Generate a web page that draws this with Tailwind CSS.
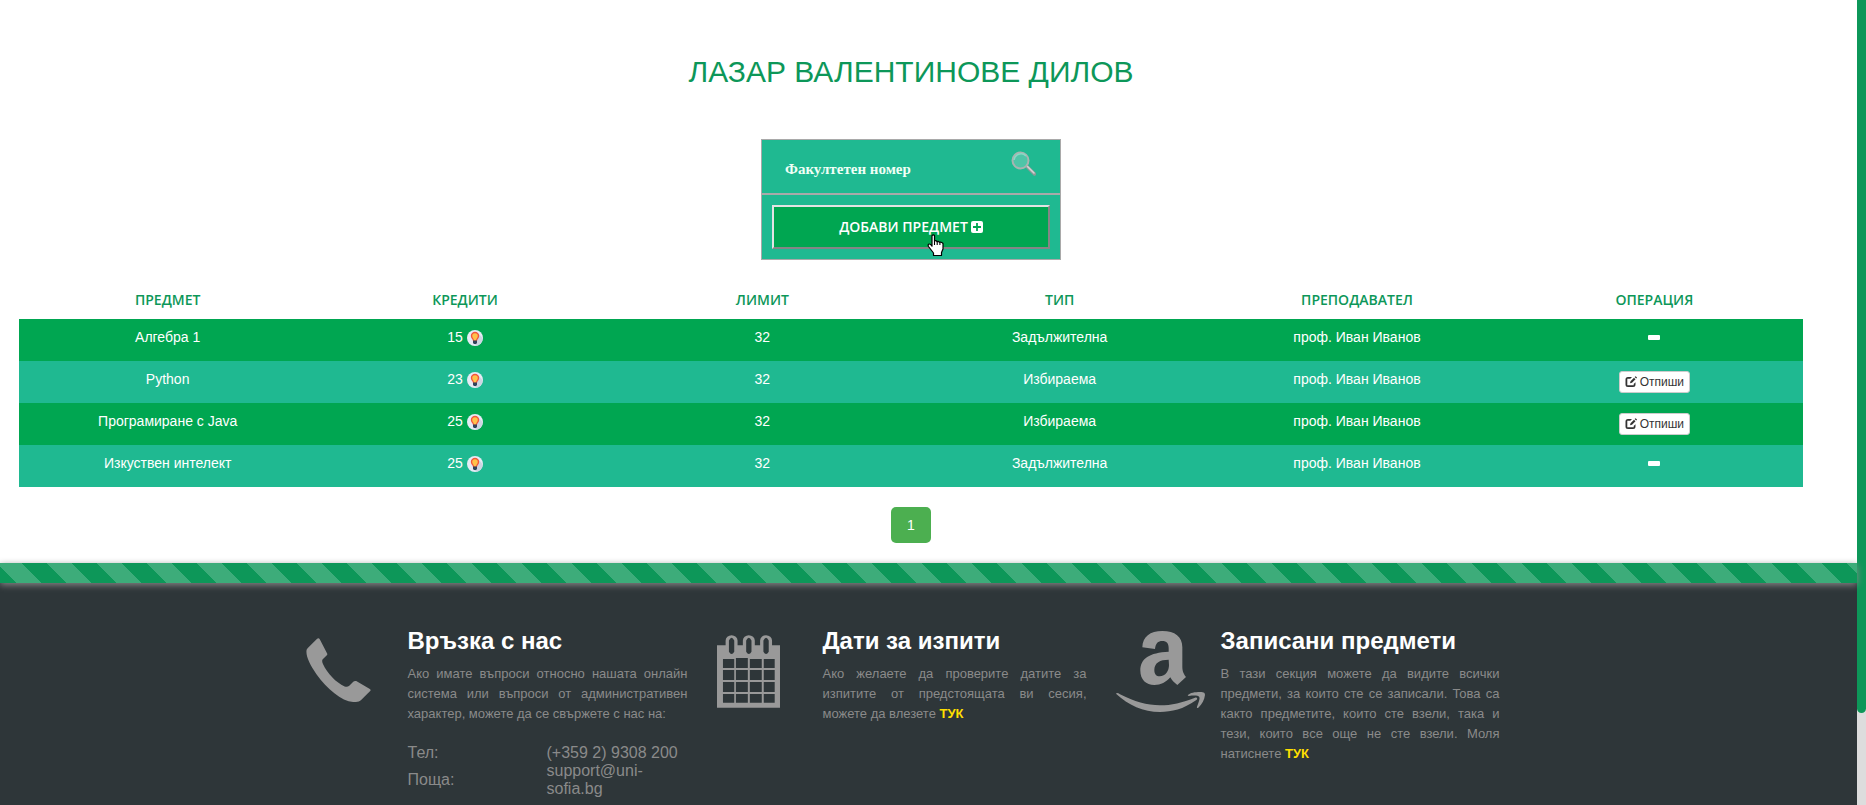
<!DOCTYPE html>
<html lang="bg">
<head>
<meta charset="utf-8">
<title>Избрани предмети</title>
<script src="https://cdn.jsdelivr.net/npm/@tailwindcss/browser@4"></script>
</head>
<body class="flex h-screen overflow-hidden bg-white font-['Liberation_Sans',Arial,sans-serif] text-sm">
<svg class="hidden">
  <symbol id="bulb" viewBox="0 0 16 16">
    <circle cx="8" cy="8" r="8" fill="#e6ebf5"/>
    <path d="M11 3l4.500 5A8 8 0 0 1 9.500 15.800L6 13z" fill="#cdd5e2"/>
    <path d="M6 11C6 9 3.800 8.500 3.800 6a4.200 4.200 0 0 1 8.400 0C12.200 8.500 10 9 10 11z" fill="#f4553c"/>
    <path d="M7 10.500C7 8.500 5.200 8 5.200 6a2.800 2.800 0 0 1 5.600 0C10.800 8 9 8.500 9 10.500z" fill="#ffc24a"/>
    <path d="M6 10.600h4v2.400L9 14H7l-1-1z" fill="#30425a"/>
  </symbol>
  <symbol id="edit" viewBox="0 0 12 12">
    <path d="M7 1H3C1.300 1 .5 1.900.5 3.500v5C.5 10.200 1.300 11 3 11h5c1.700 0 2.500-.8 2.500-2.500V6.300L8.700 8v1.200H2.300V2.800h3z" fill="#333"/>
    <path d="M5 7.200l.5-2L9 1.700l1.500 1.500L7 6.700zM9.600 1.100l.7-.7q.3-.3.600 0l.9.900q.3.300 0 .6l-.7.700z" fill="#333"/>
  </symbol>
</svg>

<div class="flex min-w-0 flex-1 flex-col">
  <main class="flex flex-col items-center pr-[54px] pl-[19px] pt-[55px]">
    <h1 class="text-[30px] leading-[33px] text-[#0d9759]">ЛАЗАР ВАЛЕНТИНОВЕ ДИЛОВ</h1>

    <form class="mt-[51px] w-[300px] border border-[#a9a9a9] bg-[#1fb991]">
      <div class="flex h-[55px] justify-between border-b-2 border-[#a9a9a9] pr-6 pl-[23px]">
        <input type="text" aria-label="Факултетен номер" placeholder="Факултетен номер" class="mt-[6px] w-48 bg-transparent font-['Liberation_Serif',serif] text-[15px] font-bold text-white outline-none placeholder:text-[#f0fff6]">
        <svg class="mt-[11px] size-[25px]" viewBox="0 0 25 25" aria-hidden="true">
          <path d="M16 15.500l7.500 7.500" stroke="#8f9a98" stroke-width="3.400" stroke-linecap="round"/>
          <path d="M16.500 15.500l6.500 6.500" stroke="#d5d5d5" stroke-width="1.600" stroke-linecap="round"/>
          <circle cx="9.500" cy="9.500" r="8" fill="#4fc5a8" stroke="#a8b4b1" stroke-width="2"/>
          <path d="M3 9a7 7 0 0 1 12-4" stroke="#8bd8c5" stroke-width="1.500" fill="none"/>
        </svg>
      </div>
      <div class="p-[10px]">
        <button type="button" class="relative flex h-11 w-full items-center justify-center gap-[3px] border-2 border-t-[#e3e3e3] border-r-[#858585] border-b-[#858585] border-l-[#e3e3e3] bg-[#00a651] font-['Open_Sans',sans-serif] text-sm font-semibold text-white">
          ДОБАВИ ПРЕДМЕТ
          <svg class="size-3" viewBox="0 0 12 12" aria-hidden="true"><rect width="12" height="12" rx="2" fill="#fff"/><path d="M6 2v8M2 6h8" stroke="#00a651" stroke-width="1.800"/></svg>
          <svg class="absolute top-[27px] left-[153px] h-[23px] w-[18px]" viewBox="0 0 18 23" aria-hidden="true">
            <path d="M5 1.500Q6.300.3 7.500 1.500V7q1.500-.8 2.500.6 1.500-.7 2.500.7 2-.6 3.500 1.200v5.500l-1.500 3.500V21.500H6.500V19L1.500 12.500Q.5 10.300 2 10q1.500-.2 3 2.200z" fill="#fff" stroke="#000" stroke-width="1.200" stroke-linejoin="round"/>
            <path d="M7.500 7v4M10.200 7.600V11M12.900 8.300V11" stroke="#000" stroke-width="1.100"/>
          </svg>
        </button>
      </div>
    </form>

    <table class="mt-[22px] w-full table-fixed border-collapse text-center">
      <thead class="font-['Open_Sans',sans-serif] text-[#0d9759]">
        <tr class="h-[37px] align-middle">
          <th class="pb-[2px] font-semibold">ПРЕДМЕТ</th><th class="pb-[2px] font-semibold">КРЕДИТИ</th><th class="pb-[2px] font-semibold">ЛИМИТ</th><th class="pb-[2px] font-semibold">ТИП</th><th class="pb-[2px] font-semibold">ПРЕПОДАВАТЕЛ</th><th class="pb-[2px] font-semibold">ОПЕРАЦИЯ</th>
        </tr>
      </thead>
      <tbody class="leading-5 text-white">
        <tr class="h-[42px] bg-[#00a651] align-top">
          <td class="pt-2">Алгебра 1</td>
          <td class="pt-2"><span class="inline-flex items-center gap-1">15 <svg class="mt-px size-4"><use href="#bulb"/></svg></span></td>
          <td class="pt-2">32</td><td class="pt-2">Задължителна</td><td class="pt-2">проф. Иван Иванов</td>
          <td class="pt-4"><span class="mx-auto block h-[5px] w-3 rounded-[1px] bg-white"></span></td>
        </tr>
        <tr class="h-[42px] bg-[#1fb991] align-top">
          <td class="pt-2">Python</td>
          <td class="pt-2"><span class="inline-flex items-center gap-1">23 <svg class="mt-px size-4"><use href="#bulb"/></svg></span></td>
          <td class="pt-2">32</td><td class="pt-2">Избираема</td><td class="pt-2">проф. Иван Иванов</td>
          <td class="pt-[10px]"><button type="button" class="mx-auto flex h-[22px] items-center gap-[3px] rounded-[3px] border border-[#ccc] bg-white px-[5px] text-xs text-[#333]"><svg class="size-3"><use href="#edit"/></svg>Отпиши</button></td>
        </tr>
        <tr class="h-[42px] bg-[#00a651] align-top">
          <td class="pt-2">Програмиране с Java</td>
          <td class="pt-2"><span class="inline-flex items-center gap-1">25 <svg class="mt-px size-4"><use href="#bulb"/></svg></span></td>
          <td class="pt-2">32</td><td class="pt-2">Избираема</td><td class="pt-2">проф. Иван Иванов</td>
          <td class="pt-[10px]"><button type="button" class="mx-auto flex h-[22px] items-center gap-[3px] rounded-[3px] border border-[#ccc] bg-white px-[5px] text-xs text-[#333]"><svg class="size-3"><use href="#edit"/></svg>Отпиши</button></td>
        </tr>
        <tr class="h-[42px] bg-[#1fb991] align-top">
          <td class="pt-2">Изкуствен интелект</td>
          <td class="pt-2"><span class="inline-flex items-center gap-1">25 <svg class="mt-px size-4"><use href="#bulb"/></svg></span></td>
          <td class="pt-2">32</td><td class="pt-2">Задължителна</td><td class="pt-2">проф. Иван Иванов</td>
          <td class="pt-4"><span class="mx-auto block h-[5px] w-3 rounded-[1px] bg-white"></span></td>
        </tr>
      </tbody>
    </table>

    <nav class="my-5"><a href="#" class="flex h-9 w-10 items-center justify-center rounded-[5px] bg-[#4caf50] text-white">1</a></nav>
  </main>

  <div class="relative z-10 h-5 shrink-0 bg-[#0d9759] bg-[linear-gradient(45deg,rgba(255,255,255,.2)_25%,transparent_25%,transparent_50%,rgba(255,255,255,.2)_50%,rgba(255,255,255,.2)_75%,transparent_75%)] bg-[length:50px_50px] bg-[position:-3px_0] shadow-[0_2px_7px_#888]"></div>

  <footer class="flex flex-1 items-start justify-center gap-[29px] bg-[#2e3639] pt-[45px] pr-[52px] text-[#8a8a8a]">
    <section class="flex w-[382px]">
      <div class="w-[102px] shrink-0 pt-[10px]">
        <svg class="h-16 w-[65px]" viewBox="44 113 195 193" aria-hidden="true"><path d="M77 115Q82 111 85 117L108 161Q108 164 104 167L94 177Q90 182 95 192C108 220 134 247 160 259Q168 262 174 257L186 245Q190 241 195 243L236 267Q240 270 237 273L209 301Q204 306 194 306C157 309 110 270 75 222C55 194 43 168 45 151Q45 147 49 143Z" fill="#999"/></svg>
      </div>
      <div class="flex-1">
        <h3 class="text-2xl leading-[26px] font-bold text-white">Връзка с нас</h3>
        <p class="mt-[10px] text-justify text-[13px] leading-5">Ако имате въпроси относно нашата онлайн система или въпроси от административен характер, можете да се свържете с нас на:</p>
        <table class="mt-5 w-full table-fixed text-left text-base leading-[18px]">
          <tbody>
            <tr><th class="w-[139px] font-normal">Тел:</th><td>(+359 2) 9308 200</td></tr>
            <tr><th class="font-normal">Поща:</th><td>support@uni-<wbr>sofia.bg</td></tr>
          </tbody>
        </table>
      </div>
    </section>
    <section class="flex w-[370px]">
      <div class="w-[106px] shrink-0 pt-[7px]">
        <svg class="h-[73px] w-[63px]" viewBox="48 105 190 219" aria-hidden="true">
          <path d="M48 135H238V324H48z" fill="#999"/>
          <path d="M74 170V121a18 16 0 0 1 36 0v49zM126 170V121a18 16 0 0 1 36 0v49zM178 170V121a18 16 0 0 1 36 0v49z" fill="#999"/>
          <path d="M84 155V121q8-16 16 0v34q-8 14-16 0zM136 155V121q8-16 16 0v34q-8 14-16 0zM188 155V121q8-16 16 0v34q-8 14-16 0z" fill="#2e3639"/>
          <path d="M66 177h34v27H66zM105 174h36v30h-36zM147 177h36v27h-36zM189 177h33v27h-33zM66 210h34v30H66zM105 210h36v30h-36zM147 210h36v30h-36zM189 210h33v30h-33zM66 246h34v30H66zM105 246h36v30h-36zM147 246h36v30h-36zM189 246h33v30h-33zM66 282h34v27H66zM105 282h36v27h-36zM147 282h36v27h-36zM189 282h33v27h-33z" fill="#2e3639"/>
        </svg>
      </div>
      <div class="flex-1">
        <h3 class="text-2xl leading-[26px] font-bold text-white">Дати за изпити</h3>
        <p class="mt-[10px] text-justify text-[13px] leading-5">Ако желаете да проверите датите за изпитите от предстоящата ви сесия, можете да влезете <a href="#" class="font-bold text-[#ffdf00]">ТУК</a></p>
      </div>
    </section>
    <section class="flex w-[384px]">
      <div class="w-[105px] shrink-0 pt-[3px]">
        <svg class="h-[81px] w-[89px]" viewBox="48 93 267 243" aria-hidden="true">
          <g fill="#999">
            <path fill-rule="evenodd" d="M127 142C128 110 150 93 187 93C225 93 247 110 247 142V200C247 215 252 222 258 231L232 255C222 248 215 240 211 232C198 247 183 255 163 255C138 255 121 238 121 212C121 175 148 158 206 155V145C206 130 200 123 187 123C174 123 167 130 165 147ZM206 179C180 179 163 188 163 210C163 222 169 229 179 229C197 229 207 212 207 195Z"/>
            <path d="M48 281C50 278 54 279 60 283C140 325 205 325 285 293C292 291 294 297 288 301C250 328 215 336 180 336C130 336 85 315 48 281Z"/>
            <path d="M263 286C270 278 285 276 300 276C313 276 315 280 315 285C313 300 307 312 295 323C292 325 290 323 291 320C297 305 300 296 298 291C294 286 282 286 266 288Z"/>
          </g>
        </svg>
      </div>
      <div class="flex-1">
        <h3 class="text-2xl leading-[26px] font-bold text-white">Записани предмети</h3>
        <p class="mt-[10px] text-justify text-[13px] leading-5">В тази секция можете да видите всички предмети, за които сте се записали. Това са както предметите, които сте взели, така и тези, които все още не сте взели. Моля натиснете <a href="#" class="font-bold text-[#ffdf00]">ТУК</a></p>
      </div>
    </section>
  </footer>
</div>

<div class="flex w-[9px] shrink-0 flex-col bg-[#ddd]"><div class="h-[713px] rounded-b-[5px] bg-[#0d9759]"></div></div>
</body>
</html>
